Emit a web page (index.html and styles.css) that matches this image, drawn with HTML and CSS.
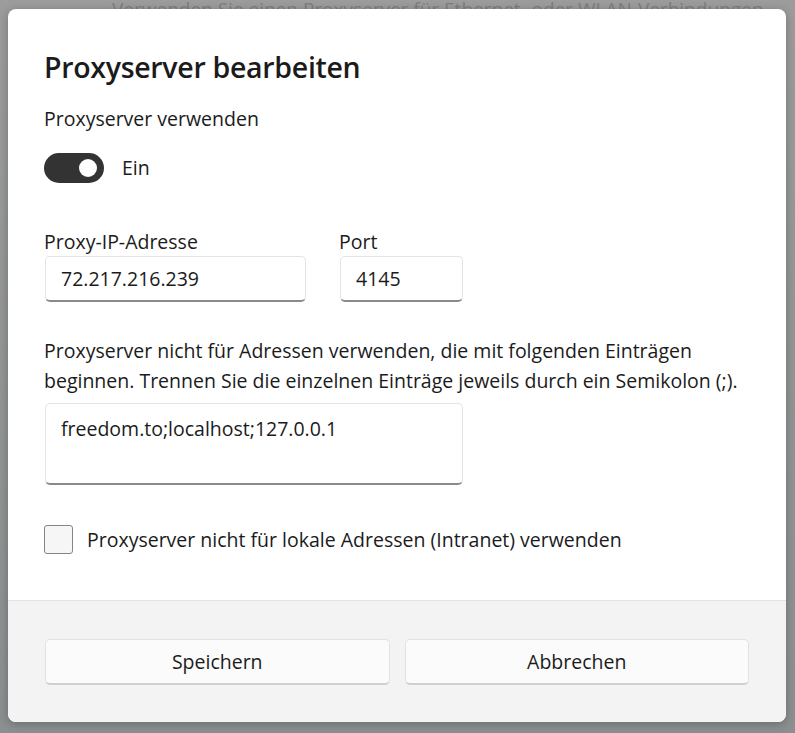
FILE: index.html
```html
<!DOCTYPE html>
<html lang="de">
<head>
<meta charset="utf-8">
<title>Proxyserver bearbeiten</title>
<link rel="stylesheet" href="styles.css">
</head>
<body>
<div class="backdrop">
  <div class="bg-text">Verwenden Sie einen Proxyserver für Ethernet- oder WLAN-Verbindungen</div>
  <div class="dialog">
    <div class="content">
      <h1 class="title">Proxyserver bearbeiten</h1>
      <div class="text">Proxyserver verwenden</div>
      <div class="toggle-row">
        <span class="toggle"><span class="knob"></span></span>
        <span class="text">Ein</span>
      </div>
      <div class="fields">
        <div class="field ip">
          <div class="text label">Proxy-IP-Adresse</div>
          <div class="input">72.217.216.239</div>
        </div>
        <div class="field port">
          <div class="text label">Port</div>
          <div class="input">4145</div>
        </div>
      </div>
      <p class="para">Proxyserver nicht für Adressen verwenden, die mit folgenden Einträgen beginnen. Trennen Sie die einzelnen Einträge jeweils durch ein Semikolon (;).</p>
      <div class="textarea">freedom.to;localhost;127.0.0.1</div>
      <div class="check-row">
        <span class="checkbox"></span>
        <span class="text">Proxyserver nicht für lokale Adressen (Intranet) verwenden</span>
      </div>
    </div>
    <div class="footer">
      <button class="btn">Speichern</button>
      <button class="btn">Abbrechen</button>
    </div>
  </div>
</div>
</body>
</html>
```

FILE: styles.css
```css
html, body {
  margin: 0;
  padding: 0;
}
body {
  width: 795px;
  height: 733px;
  overflow: hidden;
  background: linear-gradient(#9c9c9c, #8b8f8f);
  font-family: "Open Sans", "Noto Sans", sans-serif;
  color: #1b1b1b;
}
.backdrop {
  position: relative;
  padding: 9px 9px 11px 8px;
  height: 713px;
}
.bg-text {
  position: absolute;
  left: 112px;
  top: -4px;
  font-size: 19px;
  color: #7e7e7e;
  white-space: nowrap;
}
.dialog {
  position: relative;
  width: 778px;
  height: 713px;
  background: #ffffff;
  border-radius: 8px;
  overflow: hidden;
  display: flex;
  flex-direction: column;
  box-shadow: 0 2px 10px rgba(0,0,0,0.25);
}
.content {
  flex: 1;
  padding: 40px 37px 0 36px;
}
.title {
  margin: 0;
  font-size: 28.5px;
  font-weight: 600;
  line-height: 36px;
  letter-spacing: -0.3px;
}
.text {
  font-size: 19.5px;
  line-height: 26px;
}
.content > .text {
  margin-top: 21px;
}
.toggle-row {
  margin-top: 21px;
  display: flex;
  align-items: center;
  gap: 18px;
}
.toggle {
  width: 60px;
  height: 30px;
  border-radius: 15px;
  background: #333333;
  display: flex;
  align-items: center;
  justify-content: flex-end;
  padding-right: 7px;
  box-sizing: border-box;
}
.knob {
  width: 18px;
  height: 18px;
  border-radius: 50%;
  background: #ffffff;
}
.fields {
  margin-top: 46px;
  display: flex;
  gap: 33px;
}
.label {
  margin-bottom: 1px;
}
.input, .textarea {
  box-sizing: border-box;
  border: 1px solid #e4e4e4;
  border-bottom: 2px solid #8a8a8a;
  border-radius: 5px;
  background: #ffffff;
  font-size: 19.5px;
  padding-left: 15px;
  margin-left: 1px;
}
.input {
  height: 46px;
  line-height: 44px;
}
.ip .input {
  width: 261px;
}
.port .input {
  width: 123px;
}
.para {
  margin: 34px 0 0;
  font-size: 19.5px;
  line-height: 30px;
}
.textarea {
  margin-top: 7px;
  width: 418px;
  height: 82px;
  padding-top: 11px;
  line-height: 28px;
}
.check-row {
  margin-top: 40px;
  display: flex;
  align-items: center;
  gap: 14px;
}
.checkbox {
  width: 29px;
  height: 29px;
  box-sizing: border-box;
  border: 1px solid #858585;
  border-radius: 3px;
  background: #f6f6f6;
}
.footer {
  height: 122px;
  box-sizing: border-box;
  background: #f3f3f3;
  border-top: 1px solid #e3e3e3;
  padding: 38px 37px 0 37px;
  display: flex;
  gap: 15px;
}
.btn {
  flex: 1;
  height: 46px;
  box-sizing: border-box;
  background: #fbfbfb;
  border: 1px solid #e2e2e2;
  border-bottom: 2px solid #cfcfcf;
  border-radius: 5px;
  font-family: inherit;
  font-size: 19.5px;
  color: #1b1b1b;
  padding: 0;
}
```
